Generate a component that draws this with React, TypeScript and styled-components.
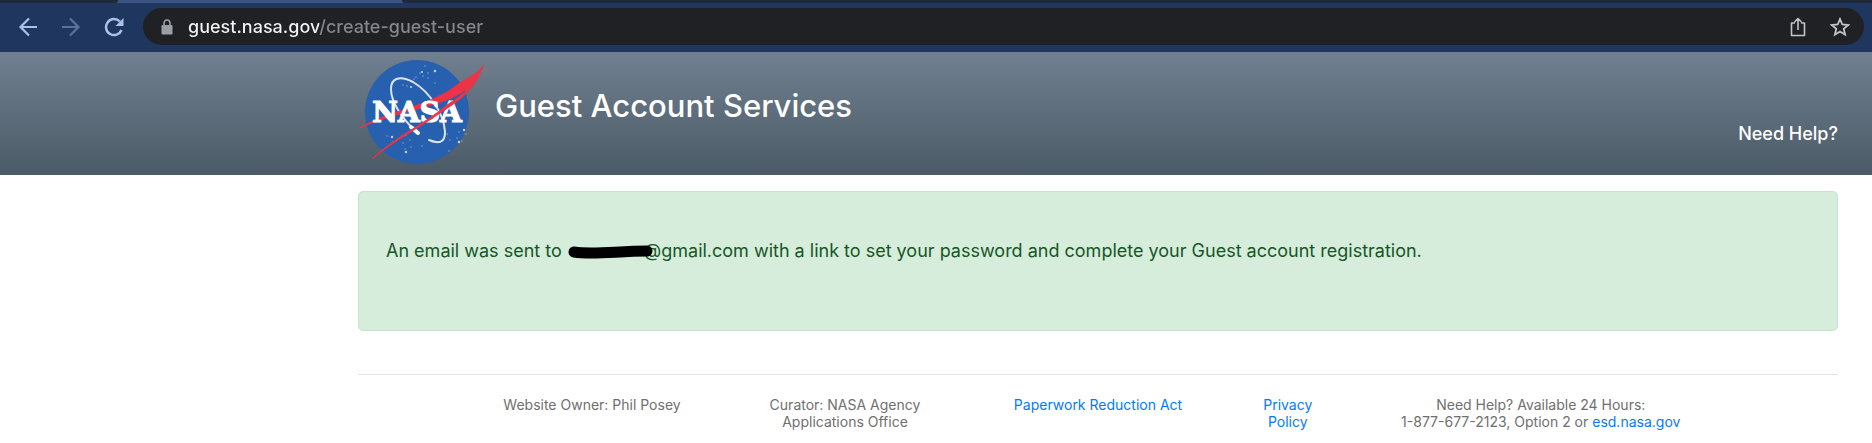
import React from 'react';
import styled, { createGlobalStyle } from 'styled-components';

const sans = `Inter, "Liberation Sans", sans-serif`;

const GlobalStyle = createGlobalStyle`
  * { box-sizing: border-box; }
  body { margin: 0; background: #fff; font-family: ${sans}; }
  a { text-decoration: none; }
`;

const BrowserBar = styled.div`
  background: #1f375f;
`;

const TabStrip = styled.div`
  display: flex;
  height: 3px;
  background: #3b5380;
`;

const TabEdge = styled.div<{ $grow?: boolean }>`
  flex: ${p => (p.$grow ? '1' : '0 0 118px')};
  background: #1d2838;
  border-radius: ${p => (p.$grow ? '0 0 0 3px' : '0 0 3px 0')};
`;

const ActiveTab = styled.div`
  flex: 0 0 284px;
`;

const Toolbar = styled.div`
  display: flex;
  align-items: center;
  padding: 5px 8px 7px 16px;
`;

const NavButton = styled.button<{ $dim?: boolean }>`
  display: flex;
  align-items: center;
  justify-content: center;
  width: 24px;
  height: 24px;
  margin-right: 19px;
  padding: 0;
  border: 0;
  background: none;
  color: ${p => (p.$dim ? '#5b7298' : '#abc2e8')};
`;

const AddressBar = styled.div`
  flex: 1;
  display: flex;
  align-items: center;
  height: 37px;
  margin-left: -2px;
  padding: 0 12px 0 16px;
  border-radius: 19px;
  background: #202124;
`;

const AddressInput = styled.input`
  flex: 1;
  min-width: 0;
  margin-left: 13px;
  padding: 0;
  border: 0;
  outline: 0;
  font: 500 18px/24px ${sans};
  color: transparent;
  caret-color: #fff;
  background: linear-gradient(90deg, #f4f5f6 131px, #85888c 131px);
  background-clip: text;
`;

const BarButton = styled.button`
  display: flex;
  align-items: center;
  justify-content: center;
  width: 24px;
  height: 24px;
  margin-left: 18px;
  padding: 0;
  border: 0;
  background: none;
  color: #c2c4c8;
`;

const Header = styled.header`
  display: flex;
  align-items: flex-start;
  min-height: 123px;
  padding: 0 34px 0 358px;
  background: linear-gradient(#708090, #4b5a66);
`;

const LogoLink = styled.a`
  display: block;
  margin-top: 4px;
`;

const Title = styled.h1`
  margin: 34px 0 0 9px;
  font-size: 31px;
  line-height: 40px;
  font-weight: 500;
  color: #fff;
`;

const HelpLink = styled.a`
  margin: 70px 0 0 auto;
  font-size: 18px;
  line-height: 24px;
  font-weight: 500;
  color: #fff;
`;

const Main = styled.main`
  padding: 16px 34px 0 358px;
`;

const Alert = styled.div`
  min-height: 140px;
  padding: 47px 27px;
  border: 1px solid #c3e6cb;
  border-radius: 5px;
  background: #d6eddc;
  color: #155724;
  font-size: 18px;
  line-height: 24px;
`;

const Message = styled.p`
  margin: 0;
`;

const Redaction = styled.svg`
  width: 86px;
  height: 16px;
  margin-right: -9px;
  vertical-align: -3px;
  position: relative;
`;

const Footer = styled.footer`
  margin: 43px 0 0;
  border-top: 1px solid #e3e3e3;
`;

const FooterRow = styled.div`
  display: grid;
  grid-template-columns: repeat(12, 1fr);
  margin: 0 -19px;
  padding: 21px 0 12px;
  font-size: 14px;
  line-height: 17px;
  color: #6f6f6f;
  text-align: center;
`;

const FooterCell = styled.div<{ $start: number; $span: number }>`
  grid-column: ${p => p.$start} / span ${p => p.$span};
  padding: 0 19px;
`;

const FooterLink = styled.a`
  color: #007bff;
`;

const stars: [number, number, number][] = [
  [67, 10, 1], [64, 16, 1.3], [70, 17, 1], [77, 15, 1.6], [65, 20, 1], [70, 22, 1], [77, 27, 1],
  [58, 21, 1], [56, 23, 1], [53, 31, 1.4], [49, 30, 1], [45, 29, 1], [62, 17, 1],
  [29, 80, 1], [34, 81, 1.5], [35, 86, 1], [45, 87, 1], [47, 93, 1], [48, 96, 1.6], [52, 84, 1],
  [53, 91, 1], [64, 90, 1], [74, 86, 1], [91, 95, 1], [101, 76, 1], [106, 74, 1.6], [108, 78, 1],
  [99, 82, 1], [101, 86, 1.6], [104, 85, 1], [89, 78, 1], [92, 84, 1], [48, 79, 1],
];

const NasaLogo = () => (
  <svg width="128" height="112" viewBox="0 0 128 112" role="img" aria-label="NASA">
    <circle cx="59" cy="56" r="52" fill="#2660ae" />
    {stars.map(([x, y, r], i) => (
      <circle key={i} cx={x} cy={y} r={r * 0.8} fill="#fff" opacity={r > 1.2 ? 0.7 : 0.4} />
    ))}
    <path
      d="M59 77C45 63 33 46 33 33C33 22 42 19 55 26C72 36 86 58 87 76C87 87 81 88 71 84"
      fill="none" stroke="#dbe5f5" strokeWidth="2" strokeLinecap="round"
    />
    <path d="M53 71L60 77" stroke="#fff" strokeWidth="4" strokeLinecap="round" />
    <path
      d="M1 72C32 54 76 49 100 28C113 20 119 18 126 9C121 22 110 36 91 43C69 52 40 56 1 72Z"
      fill="#ee3346" stroke="#ee3346" strokeWidth="0.8" strokeLinejoin="round"
    />
    <text
      x="59" y="66" textAnchor="middle" fontFamily="DejaVu Serif, serif" fontWeight="700"
      fontSize="28" fill="#fff" stroke="#fff" strokeWidth="1.2"
    >
      NASA
    </text>
    <path
      d="M14 103C38 80 64 70 89 49C101 41 113 33 121 20C112 37 100 45 88 53C62 71 39 83 15 102Z"
      fill="#ee3346" stroke="#ee3346" strokeWidth="1" strokeLinejoin="round"
    />
  </svg>
);

const BackIcon = () => (
  <svg width="20" height="20" viewBox="0 0 20 20" fill="none" stroke="currentColor" strokeWidth="2.2">
    <path d="M19 10H3M11 1.500L2.500 10L11 18.500" />
  </svg>
);

const ForwardIcon = () => (
  <svg width="20" height="20" viewBox="0 0 20 20" fill="none" stroke="currentColor" strokeWidth="2.2">
    <path d="M1 10H17M9 1.500L17.500 10L9 18.500" />
  </svg>
);

const ReloadIcon = () => (
  <svg width="20" height="20" viewBox="0 0 20 20">
    <path d="M17.500 13A8 8 0 1 1 15.800 4.500" fill="none" stroke="currentColor" strokeWidth="2.500" />
    <path d="M19.500 1V9H11.500Z" fill="currentColor" />
  </svg>
);

const LockIcon = () => (
  <svg width="16" height="18" viewBox="0 0 16 18" aria-hidden="true">
    <rect x="2.500" y="7" width="11" height="9.500" rx="1.300" fill="#9aa0a6" />
    <path d="M5 8V5.500A3 3.500 0 0 1 11 5.500V8" fill="none" stroke="#9aa0a6" strokeWidth="1.600" />
  </svg>
);

const ShareIcon = () => (
  <svg width="18" height="20" viewBox="0 0 18 20" fill="none" stroke="currentColor" strokeWidth="1.600">
    <path d="M6 6H2.500V18.500H15.500V6H12M9 13V2M5.500 5L9 1.500L12.500 5" strokeLinejoin="round" />
  </svg>
);

const StarIcon = () => (
  <svg width="20" height="20" viewBox="0 0 20 20" fill="none" stroke="currentColor" strokeWidth="1.800">
    <path d="M10 2L12.300 7.500L18.200 8L13.700 11.900L15.100 17.700L10 14.600L4.900 17.700L6.300 11.900L1.800 8L7.700 7.500Z" />
  </svg>
);

export default function App() {
  return (
    <>
      <GlobalStyle />
      <BrowserBar>
        <TabStrip>
          <TabEdge />
          <ActiveTab />
          <TabEdge $grow />
        </TabStrip>
        <Toolbar>
          <NavButton aria-label="Back"><BackIcon /></NavButton>
          <NavButton aria-label="Forward" $dim><ForwardIcon /></NavButton>
          <NavButton aria-label="Reload"><ReloadIcon /></NavButton>
          <AddressBar>
            <LockIcon />
            <AddressInput aria-label="Address" defaultValue="guest.nasa.gov/create-guest-user" spellCheck={false} />
            <BarButton aria-label="Share"><ShareIcon /></BarButton>
            <BarButton aria-label="Bookmark"><StarIcon /></BarButton>
          </AddressBar>
        </Toolbar>
      </BrowserBar>
      <Header>
        <LogoLink href="#" aria-label="Home"><NasaLogo /></LogoLink>
        <Title>Guest Account Services</Title>
        <HelpLink href="#help">Need Help?</HelpLink>
      </Header>
      <Main>
        <Alert role="status">
          <Message>
            An email was sent to{' '}
            <Redaction viewBox="0 0 86 16" aria-hidden="true">
              <path d="M7 8C26 11 51 7 80 7" fill="none" stroke="#000" strokeWidth="11" strokeLinecap="round" />
            </Redaction>
            @gmail.com with a link to set your password and complete your Guest account registration.
          </Message>
        </Alert>
        <Footer>
          <FooterRow>
            <FooterCell $start={2} $span={2}>Website Owner: Phil Posey</FooterCell>
            <FooterCell $start={4} $span={2}>Curator: NASA Agency Applications Office</FooterCell>
            <FooterCell $start={6} $span={2}><FooterLink href="#pra">Paperwork Reduction Act</FooterLink></FooterCell>
            <FooterCell $start={8} $span={1}><FooterLink href="#privacy">Privacy Policy</FooterLink></FooterCell>
            <FooterCell $start={9} $span={3}>
              Need Help? Available 24 Hours:<br />
              1-877-677-2123, Option 2 or <FooterLink href="#esd">esd.nasa.gov</FooterLink>
            </FooterCell>
          </FooterRow>
        </Footer>
      </Main>
    </>
  );
}
